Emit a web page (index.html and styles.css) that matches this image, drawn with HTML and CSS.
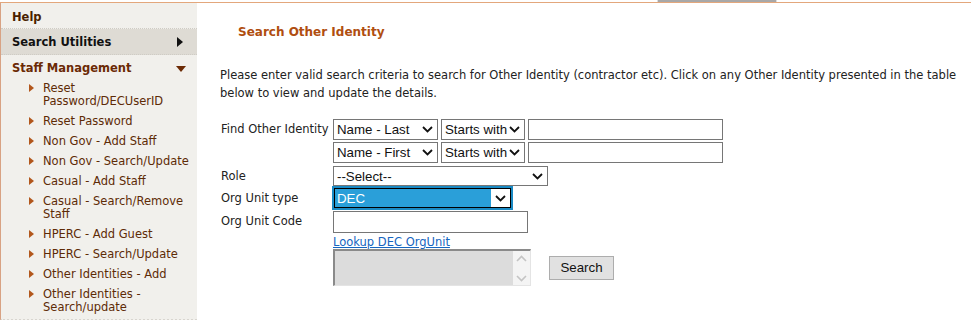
FILE: index.html
```html
<!DOCTYPE html>
<html>
<head>
<meta charset="utf-8">
<title>Search Other Identity</title>
<link rel="stylesheet" href="styles.css">
</head>
<body>
<div class="topstrip"><span class="tab"></span></div>
<div class="page">
  <nav class="sidebar">
    <div class="nav-head help">Help</div>
    <div class="nav-head active">Search Utilities<svg class="arr-right" width="6" height="10" viewBox="0 0 6 10"><path d="M0 0L6 5L0 10Z" fill="#111"/></svg></div>
    <div class="nav-head staff">Staff Management<svg class="arr-down" width="10" height="6" viewBox="0 0 10 6"><path d="M0 0H10L5 6Z" fill="#6b2a05"/></svg></div>
    <ul class="nav-list">
      <li class="nav-item"><svg class="bullet" width="5" height="8" viewBox="0 0 5 8"><path d="M0 0L5 4L0 8Z" fill="#b2571c"/></svg><span>Reset Password/DECUserID</span></li>
      <li class="nav-item"><svg class="bullet" width="5" height="8" viewBox="0 0 5 8"><path d="M0 0L5 4L0 8Z" fill="#b2571c"/></svg><span>Reset Password</span></li>
      <li class="nav-item"><svg class="bullet" width="5" height="8" viewBox="0 0 5 8"><path d="M0 0L5 4L0 8Z" fill="#b2571c"/></svg><span>Non Gov - Add Staff</span></li>
      <li class="nav-item"><svg class="bullet" width="5" height="8" viewBox="0 0 5 8"><path d="M0 0L5 4L0 8Z" fill="#b2571c"/></svg><span>Non Gov - Search/Update</span></li>
      <li class="nav-item"><svg class="bullet" width="5" height="8" viewBox="0 0 5 8"><path d="M0 0L5 4L0 8Z" fill="#b2571c"/></svg><span>Casual - Add Staff</span></li>
      <li class="nav-item"><svg class="bullet" width="5" height="8" viewBox="0 0 5 8"><path d="M0 0L5 4L0 8Z" fill="#b2571c"/></svg><span>Casual - Search/Remove Staff</span></li>
      <li class="nav-item"><svg class="bullet" width="5" height="8" viewBox="0 0 5 8"><path d="M0 0L5 4L0 8Z" fill="#b2571c"/></svg><span>HPERC - Add Guest</span></li>
      <li class="nav-item"><svg class="bullet" width="5" height="8" viewBox="0 0 5 8"><path d="M0 0L5 4L0 8Z" fill="#b2571c"/></svg><span>HPERC - Search/Update</span></li>
      <li class="nav-item"><svg class="bullet" width="5" height="8" viewBox="0 0 5 8"><path d="M0 0L5 4L0 8Z" fill="#b2571c"/></svg><span>Other Identities - Add</span></li>
      <li class="nav-item"><svg class="bullet" width="5" height="8" viewBox="0 0 5 8"><path d="M0 0L5 4L0 8Z" fill="#b2571c"/></svg><span>Other Identities - Search/update</span></li>
    </ul>
  </nav>
  <main class="content">
    <h1 class="title">Search Other Identity</h1>
    <p class="intro">Please enter valid search criteria to search for Other Identity (contractor etc). Click on any Other Identity presented in the table below to view and update the details.</p>
    <div class="form">
      <label class="lbl">Find Other Identity</label>
      <div class="ctrls">
        <span class="sel w-name"><select><option>Name - Last</option></select><svg class="chev" width="11" height="7" viewBox="0 0 11 7"><path d="M1 1L5.5 5.5L10 1" fill="none" stroke="#111" stroke-width="1.8"/></svg></span>
        <span class="sel w-op"><select><option>Starts with</option></select><svg class="chev" width="11" height="7" viewBox="0 0 11 7"><path d="M1 1L5.5 5.5L10 1" fill="none" stroke="#111" stroke-width="1.8"/></svg></span>
        <input class="txt w-val" type="text">
      </div>
      <span class="lbl"></span>
      <div class="ctrls">
        <span class="sel w-name"><select><option>Name - First</option></select><svg class="chev" width="11" height="7" viewBox="0 0 11 7"><path d="M1 1L5.5 5.5L10 1" fill="none" stroke="#111" stroke-width="1.8"/></svg></span>
        <span class="sel w-op"><select><option>Starts with</option></select><svg class="chev" width="11" height="7" viewBox="0 0 11 7"><path d="M1 1L5.5 5.5L10 1" fill="none" stroke="#111" stroke-width="1.8"/></svg></span>
        <input class="txt w-val" type="text">
      </div>
      <label class="lbl">Role</label>
      <div class="ctrls">
        <span class="sel w-role"><select><option>--Select--</option></select><svg class="chev" width="11" height="7" viewBox="0 0 11 7"><path d="M1 1L5.5 5.5L10 1" fill="none" stroke="#111" stroke-width="1.8"/></svg></span>
      </div>
      <label class="lbl">Org Unit type</label>
      <div class="ctrls">
        <span class="sel w-org focus"><select><option>DEC</option></select><svg class="chev" width="11" height="7" viewBox="0 0 11 7"><path d="M1 1L5.5 5.5L10 1" fill="none" stroke="#111" stroke-width="1.8"/></svg></span>
      </div>
      <label class="lbl">Org Unit Code</label>
      <div class="ctrls">
        <input class="txt w-code" type="text">
      </div>
      <span class="lbl"></span>
      <div class="ctrls link-row"><a href="#" class="lookup">Lookup DEC OrgUnit</a></div>
      <span class="lbl"></span>
      <div class="ctrls area-row">
        <div class="area">
          <div class="area-body"></div>
          <div class="area-scroll">
            <svg width="11" height="7" viewBox="0 0 11 7"><path d="M1 6L5.5 1.5L10 6" fill="none" stroke="#c4c4c4" stroke-width="1.6"/></svg>
            <svg width="11" height="7" viewBox="0 0 11 7"><path d="M1 1L5.5 5.5L10 1" fill="none" stroke="#c4c4c4" stroke-width="1.6"/></svg>
          </div>
        </div>
        <button class="btn" type="button">Search</button>
      </div>
    </div>
  </main>
</div>
</body>
</html>
```

FILE: styles.css
```css
* { box-sizing: border-box; }
html, body { margin: 0; padding: 0; background: #fff; }
body { font-family: "DejaVu Sans", Verdana, sans-serif; font-size: 11.5px; color: #222; overflow: hidden; }

.topstrip { height: 2px; display: flex; }
.tab { width: 120px; height: 2px; margin-left: 657px; background: #a8a8a8; border-left: 1px solid #ddd; border-right: 1px solid #ddd; }

.page { display: flex; border-top: 1px solid #e3a77c; min-height: 318px; }

.sidebar { width: 197px; flex: none; background: #f1f0ec; border-left: 1px solid #d8a283; border-bottom: 2px dotted #d8d5cf; }
.nav-head { height: 26px; padding-left: 11px; display: flex; align-items: center; font-weight: bold; font-size: 11.5px; border-bottom: 1px dotted #cfccc5; position: relative; }
.help { color: #4a1f00; padding-top: 2px; }
.active { background: #dedbd4; color: #111; }
.staff { color: #6b2a05; border-bottom: none; height: 24px; padding-top: 2px; }
.arr-right { position: absolute; left: 176px; top: 8px; }
.arr-down { position: absolute; left: 175px; top: 11px; }

.nav-list { list-style: none; margin: 0; padding: 0 0 1px 0; }
.nav-item { display: flex; align-items: flex-start; padding: 3px 4px 4px 28px; line-height: 13px; color: #5e2b06; }
.bullet { flex: none; margin-top: 2px; margin-right: 9px; }
.nav-item span { max-width: 152px; }

.content { flex: 1; padding-left: 23px; padding-right: 8px; }
.title { margin: 20px 0 0 18px; font-size: 12px; font-weight: bold; color: #b04e10; line-height: 18px; }
.intro { margin: 25px 0 0 0; line-height: 18px; color: #222; }

.form { display: grid; grid-template-columns: 112px auto; grid-template-rows: 23px 24px 22px 23px 24px 14px 38px; margin-top: 17px; align-items: start; }
.lbl { color: #222; padding-left: 1px; line-height: 20px; }
.ctrls { display: flex; align-items: center; gap: 3px; }

.sel { position: relative; display: inline-block; height: 21px; }
.sel select { appearance: none; -webkit-appearance: none; width: 100%; height: 100%; border: 1px solid #767676; border-radius: 0; background: #fff; font-family: "Liberation Sans", Arial, sans-serif; font-size: 13.3px; color: #111; padding: 0 0 0 3px; margin: 0; }
.chev { position: absolute; right: 5px; top: 7px; pointer-events: none; }
.w-name { width: 105px; margin-left: 1px; }
.w-op { width: 84px; }
.w-role { width: 215px; height: 20px; margin-left: 1px; }
.w-org { width: 177px; height: 20px; margin-left: 2px; }
.focus { outline: 2px solid #1a8ac4; outline-offset: 0; }
.focus select { border: 1px solid #000; color: #fff; background: linear-gradient(to right, #2a9fd9 calc(100% - 19px), #fff 0); padding-left: 2px; }

.txt { height: 21px; border: 1px solid #767676; margin: 0; padding: 0; background: #fff; }
.w-val { width: 195px; }
.w-code { width: 195px; height: 22px; margin-left: 1px; }

.link-row { height: 14px; align-items: center; padding-left: 1px; }
.lookup { color: #1565c0; text-decoration: underline; font-size: 11.5px; line-height: 13px; }

.area-row { align-items: center; gap: 18px; padding-left: 1px; }
.area { width: 198px; height: 37px; display: flex; border-top: 2px solid #8a8a8a; border-left: 2px solid #8a8a8a; border-right: 1px solid #e4e4e4; border-bottom: 1px solid #e4e4e4; }
.area-body { flex: 1; background: #dcdcdc; }
.area-scroll { width: 17px; background: #f4f4f4; display: flex; flex-direction: column; justify-content: space-between; align-items: center; padding: 4px 0 3px; }
.btn { width: 65px; height: 24px; margin: 0; background: #e1e1e1; border: 1px solid #adadad; border-radius: 0; font-family: "Liberation Sans", Arial, sans-serif; font-size: 13.3px; color: #111; padding: 0; }
```
